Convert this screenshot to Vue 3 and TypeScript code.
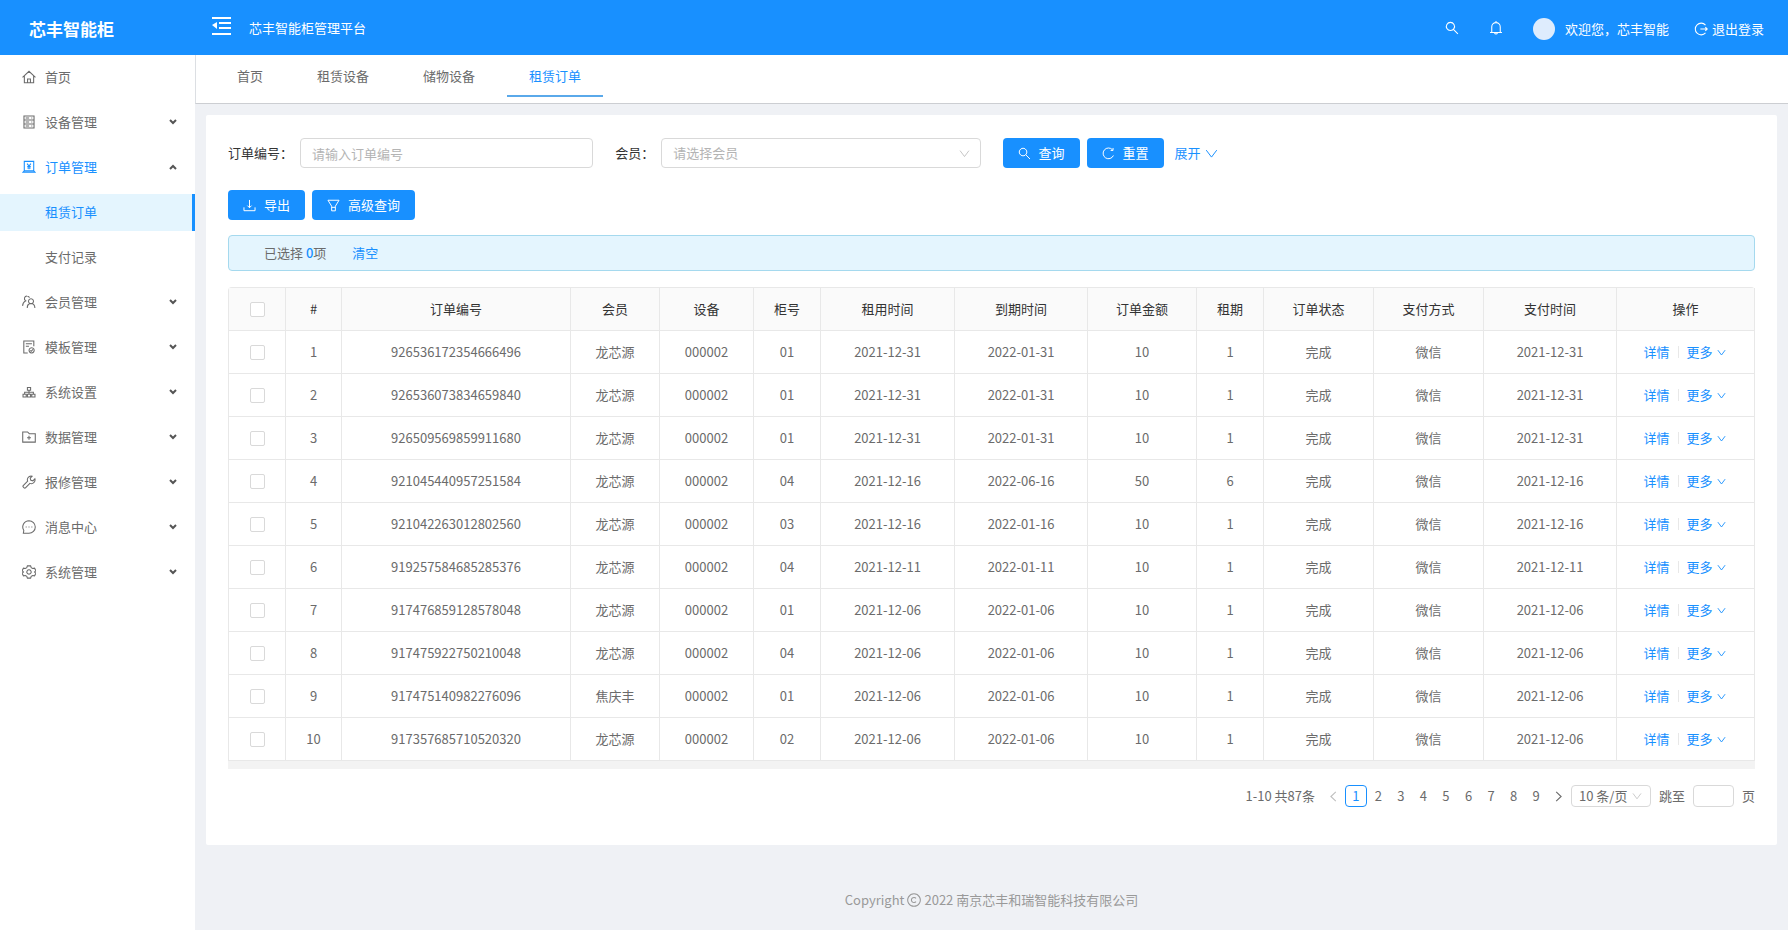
<script setup lang="ts">
import { computed, ref } from 'vue'

interface MenuEntry {
  label: string
  icon: string
  leaf?: boolean
  open?: boolean
  children?: string[]
}

interface Order {
  id: string
  member: string
  cabinet: string
  start: string
  end: string
  amount: number
  term: number
}

const icons: Record<string, string> = {
  home: 'M100 540L512 150l412 390M215 450v430h594V450M420 880V640h184v240',
  device: 'M190 125h644v774H190zM190 383h644M190 641h644M300 254h220M300 512h220M300 770h220M660 254h60M660 512h60M660 770h60',
  order: 'M210 150h604v610H210zM210 760L120 850h784l-90-90M390 300l122 160 122-160M512 460v190M400 480h224M400 570h224',
  member: 'M390 130a165 165 0 0 1 150 110M390 130a165 165 0 0 0-85 310C190 490 110 600 100 760M640 300a160 160 0 1 0 .1 0M400 890c10-170 110-280 240-280s240 110 250 280M400 890c-5-100 10-170 60-230',
  template: 'M430 890H180V130h640v330M310 300h390M310 460h200M680 560a165 165 0 1 0 .1 0M600 730l55 55 110-120',
  system: 'M410 220h204v180H410zM130 650h204v180H130zM410 650h204v180H410zM690 650h204v180H690zM232 650V525h560v125M512 400v250',
  data: 'M110 190h310l110 110h384v540H110zM512 430v250M387 555h250',
  repair: 'M640 130a240 240 0 0 0-215 330L140 745a60 60 0 0 0 0 85l60 60a60 60 0 0 0 85 0l285-290a240 240 0 0 0 320-290L760 440l-130-40-40-130 120-130a240 240 0 0 0-70-10z',
  message: 'M512 110a402 402 0 0 1 0 804H150l30-180A402 402 0 0 1 512 110zM300 512h60M482 512h60M664 512h60',
  setting: 'M410 120h204l40 120 90 50 125-25 85 165-85 82 85 82-85 165-125-25-90 50-40 120H410l-40-120-90-50-125 25-85-165 85-82-85-82 85-165 125 25 90-50zM512 372a140 140 0 1 0 .1 0',
  search: 'M412 150a262 262 0 1 0 .1 0M600 600l290 290',
  bell: 'M512 70v90M240 800V440a272 272 0 0 1 544 0v360M130 805h764M420 820a95 95 0 0 0 184 0',
  reload: 'M850 650A370 370 0 1 1 790 260M825 130v170H660',
  logout: 'M800 260A375 375 0 1 0 800 764M470 512h430M790 400l120 112-120 112',
  download: 'M512 130v530M370 520l142 145 142-145M130 640v230h764V640',
  filter: 'M130 150h764L640 560v320H384V560zM384 640h256',
  down: 'M150 280l362 480 362-480',
  left: 'M700 140L300 512l400 372',
  right: 'M324 140l400 372-400 372',
  copyright: 'M512 110a402 402 0 1 0 .1 0M640 410a165 165 0 1 0 0 204'
}

const menu = ref<MenuEntry[]>([
  { label: '首页', icon: 'home', leaf: true },
  { label: '设备管理', icon: 'device' },
  { label: '订单管理', icon: 'order', open: true, children: ['租赁订单', '支付记录'] },
  { label: '会员管理', icon: 'member' },
  { label: '模板管理', icon: 'template' },
  { label: '系统设置', icon: 'system' },
  { label: '数据管理', icon: 'data' },
  { label: '报修管理', icon: 'repair' },
  { label: '消息中心', icon: 'message' },
  { label: '系统管理', icon: 'setting' }
])

const current = '租赁订单'
const tabs = ['首页', '租赁设备', '储物设备', '租赁订单']

const columns: { title: string; width: number }[] = [
  { title: '#', width: 56 },
  { title: '订单编号', width: 229 },
  { title: '会员', width: 89 },
  { title: '设备', width: 94 },
  { title: '柜号', width: 67 },
  { title: '租用时间', width: 134 },
  { title: '到期时间', width: 133 },
  { title: '订单金额', width: 109 },
  { title: '租期', width: 67 },
  { title: '订单状态', width: 110 },
  { title: '支付方式', width: 110 },
  { title: '支付时间', width: 133 },
  { title: '操作', width: 138 }
]

const order = (id: string, member: string, cabinet: string, start: string, end: string, amount = 10, term = 1): Order =>
  ({ id, member, cabinet, start, end, amount, term })

const orders: Order[] = [
  order('926536172354666496', '龙芯源', '01', '2021-12-31', '2022-01-31'),
  order('926536073834659840', '龙芯源', '01', '2021-12-31', '2022-01-31'),
  order('926509569859911680', '龙芯源', '01', '2021-12-31', '2022-01-31'),
  order('921045440957251584', '龙芯源', '04', '2021-12-16', '2022-06-16', 50, 6),
  order('921042263012802560', '龙芯源', '03', '2021-12-16', '2022-01-16'),
  order('919257584685285376', '龙芯源', '04', '2021-12-11', '2022-01-11'),
  order('917476859128578048', '龙芯源', '01', '2021-12-06', '2022-01-06'),
  order('917475922750210048', '龙芯源', '04', '2021-12-06', '2022-01-06'),
  order('917475140982276096', '焦庆丰', '01', '2021-12-06', '2022-01-06'),
  order('917357685710520320', '龙芯源', '02', '2021-12-06', '2022-01-06')
]

const selected = ref<string[]>([])
const allSelected = computed(() => selected.value.length === orders.length)
const toggleAll = () => {
  selected.value = allSelected.value ? [] : orders.map((o) => o.id)
}

const page = ref(1)
const orderNo = ref('')
const member = ref('')
const jump = ref('')
</script>

<template>
  <div class="app">
    <header class="header">
      <h1 class="brand">芯丰智能柜</h1>
      <button class="plain fold" type="button" aria-label="收起菜单">
        <svg viewBox="0 0 19 18"><path d="M0 1h19M7 6h12M7 11h12M0 17h19" fill="none" stroke="currentColor" stroke-width="2" /><path d="M5 5v7L0 8z" fill="currentColor" /></svg>
      </button>
      <span class="platform">芯丰智能柜管理平台</span>
      <div class="tools">
        <button class="plain" type="button" aria-label="搜索"><svg class="icon" viewBox="64 64 896 896"><path :d="icons.search" /></svg></button>
        <button class="plain" type="button" aria-label="通知"><svg class="icon" viewBox="64 64 896 896"><path :d="icons.bell" /></svg></button>
        <span class="user"><i class="avatar"></i>欢迎您，芯丰智能</span>
        <a class="logout" href="#"><svg class="icon" viewBox="64 64 896 896"><path :d="icons.logout" /></svg>退出登录</a>
      </div>
    </header>

    <div class="body">
      <nav class="side" aria-label="主菜单">
        <ul>
          <template v-for="item in menu" :key="item.label">
            <li>
              <a v-if="item.leaf" class="entry" href="#">
                <svg class="icon" viewBox="64 64 896 896"><path :d="icons[item.icon]" /></svg>{{ item.label }}
              </a>
              <button v-else class="plain entry" :class="{ active: item.children }" type="button" :aria-expanded="!!item.open" @click="item.open = !item.open">
                <svg class="icon" viewBox="64 64 896 896"><path :d="icons[item.icon]" /></svg>{{ item.label }}
                <svg class="arrow" :class="{ up: item.open }" viewBox="0 0 8 6"><path d="M1 1l3 3 3-3" /></svg>
              </button>
            </li>
            <template v-if="item.open">
              <li v-for="child in item.children" :key="child">
                <a class="entry child" :class="{ current: child === current }" href="#">{{ child }}</a>
              </li>
            </template>
          </template>
        </ul>
      </nav>

      <div class="content">
        <nav class="tabs" aria-label="页签">
          <a v-for="tab in tabs" :key="tab" href="#" class="tab" :class="{ current: tab === current }">{{ tab }}</a>
        </nav>

        <main class="card">
          <form class="search" @submit.prevent>
            <div class="field">
              <label for="order-no">订单编号：</label>
              <input id="order-no" v-model="orderNo" class="control" type="text" placeholder="请输入订单编号" />
            </div>
            <div class="field">
              <label for="member">会员：</label>
              <span class="picker">
                <select id="member" v-model="member" class="control" :class="{ empty: !member }">
                  <option value="">请选择会员</option>
                  <option>龙芯源</option>
                  <option>焦庆丰</option>
                </select>
                <svg class="icon caret" viewBox="64 64 896 896"><path :d="icons.down" /></svg>
              </span>
            </div>
            <div class="actions">
              <button class="btn" type="submit"><svg class="icon" viewBox="64 64 896 896"><path :d="icons.search" /></svg>查询</button>
              <button class="btn" type="reset"><svg class="icon" viewBox="64 64 896 896"><path :d="icons.reload" /></svg>重置</button>
              <a class="expand" href="#">展开<svg class="icon" viewBox="64 64 896 896"><path :d="icons.down" /></svg></a>
            </div>
          </form>

          <div class="actions operators">
            <button class="btn" type="button"><svg class="icon" viewBox="64 64 896 896"><path :d="icons.download" /></svg>导出</button>
            <button class="btn" type="button"><svg class="icon" viewBox="64 64 896 896"><path :d="icons.filter" /></svg>高级查询</button>
          </div>

          <div class="notice">
            <span>已选择 <b>{{ selected.length }}</b>项</span>
            <button class="plain link" type="button" @click="selected = []">清空</button>
          </div>

          <div class="table-wrap">
            <table>
              <colgroup>
                <col :style="{ width: '57px' }" />
                <col v-for="c in columns" :key="c.title" :style="{ width: c.width + 'px' }" />
              </colgroup>
              <thead>
                <tr>
                  <th><input type="checkbox" aria-label="全选" :checked="allSelected" @change="toggleAll" /></th>
                  <th v-for="c in columns" :key="c.title" scope="col">{{ c.title }}</th>
                </tr>
              </thead>
              <tbody>
                <tr v-for="(o, i) in orders" :key="o.id">
                  <td><input v-model="selected" type="checkbox" :value="o.id" :aria-label="'选择订单 ' + o.id" /></td>
                  <td>{{ i + 1 }}</td>
                  <td>{{ o.id }}</td>
                  <td>{{ o.member }}</td>
                  <td>000002</td>
                  <td>{{ o.cabinet }}</td>
                  <td>{{ o.start }}</td>
                  <td>{{ o.end }}</td>
                  <td>{{ o.amount }}</td>
                  <td>{{ o.term }}</td>
                  <td>完成</td>
                  <td>微信</td>
                  <td>{{ o.start }}</td>
                  <td>
                    <span class="row-actions">
                      <a href="#">详情</a>
                      <a class="more" href="#">更多<svg class="icon" viewBox="64 64 896 896"><path :d="icons.down" /></svg></a>
                    </span>
                  </td>
                </tr>
              </tbody>
            </table>
          </div>

          <div class="pagination">
            <span class="total">1-10 共87条</span>
            <div class="pager">
              <button class="plain" type="button" aria-label="上一页" disabled><svg class="icon" viewBox="64 64 896 896"><path :d="icons.left" /></svg></button>
              <button v-for="n in 9" :key="n" class="plain" :class="{ current: n === page }" type="button" @click="page = n">{{ n }}</button>
              <button class="plain" type="button" aria-label="下一页"><svg class="icon" viewBox="64 64 896 896"><path :d="icons.right" /></svg></button>
            </div>
            <span class="picker size">
              <select class="control" aria-label="每页条数">
                <option>10 条/页</option>
                <option>20 条/页</option>
                <option>30 条/页</option>
              </select>
              <svg class="icon caret" viewBox="64 64 896 896"><path :d="icons.down" /></svg>
            </span>
            <label class="jump">跳至<input v-model="jump" class="control" type="text" />页</label>
          </div>
        </main>

        <footer class="footer">Copyright <svg class="icon" viewBox="64 64 896 896"><path :d="icons.copyright" /></svg> 2022 南京芯丰和瑞智能科技有限公司</footer>
      </div>
    </div>
  </div>
</template>

<style>
body {
  margin: 0;
  background: #eff1f5;
}
</style>

<style scoped>
.app {
  display: flex;
  flex-direction: column;
  min-height: 100vh;
  color: #6b6b6b;
  font-family: "Noto Sans CJK SC", "Noto Sans", sans-serif;
  font-size: 13px;
  line-height: 20px;
}

.app *,
.app *::before,
.app *::after {
  box-sizing: border-box;
}

a {
  color: inherit;
  text-decoration: none;
}

ul {
  margin: 0;
  padding: 0;
  list-style: none;
}

input,
select,
button {
  margin: 0;
  color: inherit;
  font: inherit;
}

.plain {
  padding: 0;
  border: 0;
  background: none;
  cursor: pointer;
}

.icon {
  display: block;
  flex: none;
  width: 13px;
  height: 13px;
  fill: none;
  stroke: currentColor;
  stroke-width: 68;
}

.header {
  display: flex;
  align-items: center;
  height: 55px;
  padding-right: 24px;
  background: #1890ff;
  color: #fff;
}

.brand {
  width: 183px;
  margin: 0 0 0 29px;
  padding-top: 3px;
  font-size: 17px;
  font-weight: 700;
  line-height: 24px;
}

.fold svg {
  display: block;
  width: 19px;
  height: 18px;
  margin-bottom: 4px;
}

.platform {
  margin-left: 18px;
}

.tools {
  display: flex;
  align-items: center;
  gap: 30px;
  margin-left: auto;
}

.tools .icon {
  width: 14px;
  height: 14px;
}

.user {
  display: flex;
  align-items: center;
  gap: 10px;
  padding-top: 3px;
}

.avatar {
  width: 22px;
  height: 22px;
  border-radius: 50%;
  background: #deecfd;
}

.logout {
  display: flex;
  align-items: center;
  gap: 4px;
  margin-left: -5px;
  padding-top: 2px;
}

.body {
  display: flex;
  flex: 1;
}

.side {
  flex: none;
  width: 195px;
  background: #fff;
}

.entry {
  display: flex;
  align-items: center;
  gap: 9px;
  width: 100%;
  height: 37px;
  margin: 4px 0 8px;
  padding: 0 18px 2px 22px;
}

li + li .entry {
  margin-top: 0;
}

.entry .icon {
  width: 14px;
  height: 14px;
}

.entry.active {
  color: #1890ff;
}

.entry.child {
  padding-left: 45px;
}

.entry.current {
  border-right: 3px solid #1890ff;
  background: #e4f5fe;
  color: #1890ff;
}

.arrow {
  width: 8px;
  height: 6px;
  margin-left: auto;
  fill: none;
  stroke: #555;
  stroke-width: 2;
}

.arrow.up {
  transform: rotate(180deg);
}

.content {
  flex: 1;
  min-width: 0;
}

.tabs {
  display: flex;
  gap: 10px;
  height: 49px;
  padding-left: 19px;
  border-bottom: 1px solid #ccced2;
  border-left: 1px solid #dcdfe3;
  background: #fff;
}

.tab {
  height: 42px;
  padding: 11px 22px 9px;
}

.tab.current {
  border-bottom: 2px solid #5aa9ea;
  color: #1890ff;
}

.card {
  margin: 11px 11px 0;
  padding: 23px 22px 38px;
  border-radius: 2px;
  background: #fff;
}

.search {
  display: grid;
  grid-template-columns: repeat(4, 1fr);
  gap: 22px;
}

.field {
  display: flex;
  align-items: center;
}

.field label {
  flex: none;
  padding-right: 7px;
  color: #333;
}

.control {
  width: 100%;
  height: 30px;
  padding: 0 11px;
  border: 1px solid #d9d9d9;
  border-radius: 4px;
  outline: 0;
  background: #fff;
  appearance: none;
}

.control::placeholder,
.control.empty {
  color: #b4b4b4;
}

.picker {
  display: grid;
  flex: 1;
  align-items: center;
}

.picker > * {
  grid-area: 1 / 1;
}

.caret {
  justify-self: end;
  width: 11px;
  height: 11px;
  margin-right: 11px;
  color: #bbb;
  pointer-events: none;
}

.actions {
  display: flex;
  align-items: center;
  gap: 7px;
}

.operators {
  margin-top: 22px;
}

.btn {
  display: flex;
  align-items: center;
  gap: 8px;
  height: 30px;
  padding: 0 15px;
  border: 0;
  border-radius: 4px;
  background: #1890ff;
  color: #fff;
  cursor: pointer;
}

.expand {
  display: flex;
  align-items: center;
  gap: 4px;
  margin-left: 4px;
  color: #1890ff;
}

.notice {
  display: flex;
  align-items: center;
  gap: 26px;
  height: 36px;
  margin: 15px 0 16px;
  padding: 0 35px;
  border: 1px solid #a5d9ee;
  border-radius: 4px;
  background: #e4f5fe;
}

.notice b,
.link {
  color: #1890ff;
}

.notice b {
  font-weight: 500;
}

.table-wrap {
  border-bottom: 8px solid #f3f3f3;
}

table {
  width: 100%;
  border: solid #e8e8e8;
  border-width: 1px 0 0 1px;
  border-radius: 4px 4px 0 0;
  border-spacing: 0;
  table-layout: fixed;
}

th,
td {
  height: 43px;
  padding: 0;
  border: solid #e8e8e8;
  border-width: 0 1px 1px 0;
  text-align: center;
}

th {
  background: #fafafa;
  color: #333;
  font-weight: 400;
}

input[type="checkbox"] {
  display: block;
  width: 15px;
  height: 15px;
  margin: 0 auto;
  border: 1px solid #d9d9d9;
  border-radius: 2px;
  background: #fff;
  appearance: none;
}

input[type="checkbox"]:checked {
  border-color: #1890ff;
  background: #1890ff;
}

.row-actions {
  display: flex;
  align-items: center;
  justify-content: center;
  padding-right: 2px;
  color: #1890ff;
}

.more {
  display: flex;
  align-items: center;
  gap: 4px;
}

.more::before {
  width: 1px;
  height: 12px;
  margin: 0 4px 0 8px;
  background: #e8e8e8;
  content: "";
}

.more .icon {
  width: 9px;
  height: 9px;
  stroke-width: 90;
}

.pagination {
  display: flex;
  align-items: center;
  justify-content: flex-end;
  margin-top: 16px;
}

.total {
  margin-right: 7px;
}

.pager {
  display: grid;
  grid-template-columns: repeat(11, 1fr);
  width: 248px;
}

.pager button {
  display: grid;
  place-items: center;
  height: 22px;
}

.pager .icon {
  width: 11px;
  height: 11px;
  stroke-width: 90;
}

.pager button:disabled {
  color: #bfbfbf;
}

.pager .current {
  border: 1px solid #1890ff;
  border-radius: 4px;
  color: #1890ff;
}

.size {
  flex: none;
  width: 80px;
  margin: 0 8px 0 1px;
}

.size .control {
  height: 22px;
  padding: 0 7px;
}

.size .caret {
  width: 10px;
  height: 10px;
  margin-right: 9px;
}

.jump {
  display: flex;
  align-items: center;
  gap: 8px;
}

.jump .control {
  width: 41px;
  height: 22px;
}

.footer {
  display: flex;
  align-items: center;
  justify-content: center;
  gap: 3px;
  padding: 45px 0 20px;
  color: #999;
}

.footer .icon {
  width: 14px;
  height: 14px;
}
</style>
